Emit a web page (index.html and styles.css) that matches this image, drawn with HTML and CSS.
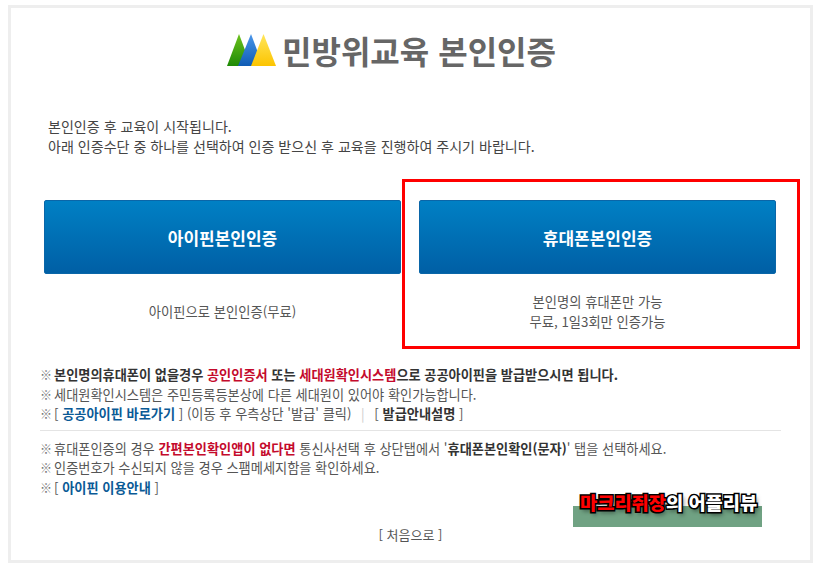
FILE: index.html
```html
<!DOCTYPE html>
<html lang="ko">
<head>
    <meta charset="UTF-8">
    <title>민방위교육 본인인증</title>
    <link rel="stylesheet" href="styles.css">
</head>
<body>

<div id="container">
    <h1 class="title">
        <svg class="logo" width="49" height="33" viewBox="0 0 49 33">
            <defs>
                <linearGradient id="logoGreen" x1="0" y1="0" x2="0" y2="1">
                    <stop offset="0" stop-color="#6cc21c"/>
                    <stop offset="1" stop-color="#1f8a06"/>
                </linearGradient>
                <linearGradient id="logoBlue" x1="0" y1="0" x2="0" y2="1">
                    <stop offset="0" stop-color="#4a96ea"/>
                    <stop offset="1" stop-color="#0f5cb4"/>
                </linearGradient>
                <linearGradient id="logoYellow" x1="0" y1="0" x2="0" y2="1">
                    <stop offset="0" stop-color="#ffe65c"/>
                    <stop offset="1" stop-color="#fcc400"/>
                </linearGradient>
            </defs>
            <polygon points="12,0 24,32 0,32" fill="url(#logoGreen)"/>
            <polygon points="24,0 36,32 11,32" fill="url(#logoBlue)"/>
            <polygon points="36.5,0 49,32 24,32" fill="url(#logoYellow)"/>
        </svg>
        <span>민방위교육 본인인증</span>
    </h1>

    <p class="intro">
        본인인증 후 교육이 시작됩니다.<br>
        아래 인증수단 중 하나를 선택하여 인증 받으신 후 교육을 진행하여 주시기 바랍니다.
    </p>

    <div class="methods">
        <div class="method">
            <a class="btn">아이핀본인인증</a>
            <p class="methodText">아이핀으로 본인인증(무료)</p>
        </div>
        <div class="method">
            <a class="btn">휴대폰본인인증</a>
            <p class="methodText">본인명의 휴대폰만 가능<br>무료, 1일3회만 인증가능</p>
        </div>
    </div>

    <ul class="notes">
        <li><b>본인명의휴대폰이 없을경우 <em>공인인증서</em> 또는 <em>세대원확인시스템</em>으로 공공아이핀을 발급받으시면 됩니다.</b></li>
        <li>세대원확인시스템은 주민등록등본상에 다른 세대원이 있어야 확인가능합니다.</li>
        <li>[ <a class="link">공공아이핀 바로가기</a> ] (이동 후 우측상단 '발급' 클릭) <span class="sep">|</span> [ <b>발급안내설명</b> ]</li>
    </ul>

    <ul class="notes notesLast">
        <li>휴대폰인증의 경우 <b><em>간편본인확인앱이 없다면</em></b> 통신사선택 후 상단탭에서 '<b>휴대폰본인확인(문자)</b>' 탭을 선택하세요.</li>
        <li>인증번호가 수신되지 않을 경우 스팸메세지함을 확인하세요.</li>
        <li>[ <a class="link">아이핀 이용안내</a> ]</li>
    </ul>

    <p class="home">[ 처음으로 ]</p>

    <!-- annotations drawn over the captured page -->
    <div class="redBox"></div>
    <div class="stamp">
        <div class="stampBar"></div>
        <div class="stampText"><span class="red">마크리쥐장</span>의 어플리뷰</div>
    </div>
</div>

</body>
</html>
```

FILE: styles.css
```css
* {
    box-sizing: border-box;
}

body {
    margin: 0;
    background-color: white;
    font-family: "Noto Sans CJK KR", "Liberation Sans", sans-serif;
    color: #555;
}

/*CSS for whole page*/
#container {
    position: relative;
    width: 805px;
    height: 558px;
    margin: 5px 0 0 8px;
    border: 3px solid #eee;
    overflow: hidden;
}

.title {
    display: flex;
    justify-content: center;
    align-items: center;
    gap: 6px;
    height: 48px;
    margin: 18px 0 0 0;
    padding-right: 38px;
    font-size: 32px;
    font-weight: 700;
    color: #666;
}

.logo {
    flex: none;
}

.intro {
    margin: 42px 0 0 37px;
    font-size: 14.06px;
    line-height: 20px;
    color: #444;
}

.methods {
    display: flex;
    gap: 18px;
    margin: 44px 0 0 33px;
}

.method {
    width: 357px;
    text-align: center;
}

.btn {
    display: flex;
    justify-content: center;
    align-items: center;
    height: 74px;
    border: 1px solid #0a66a8;
    border-radius: 2px;
    background: linear-gradient(#0080c4, #005fa5);
    font-size: 17px;
    font-weight: 700;
    color: white;
}

.methodText {
    display: flex;
    align-items: center;
    justify-content: center;
    height: 40px;
    margin: 18px 0 0 0;
    font-size: 13.3px;
    line-height: 20px;
}

.notes {
    list-style: none;
    margin: 0 29px 0 29px;
    padding: 0;
    font-size: 13.2px;
    line-height: 19.5px;
}

.notes:first-of-type {
    margin-top: 33px;
    padding-bottom: 6px;
    border-bottom: 1px solid #e4e4e4;
}

.notesLast {
    margin-top: 8px;
}

.notes li::before {
    content: "※";
    display: inline-block;
    width: 14px;
    font-size: 12px;
    color: #777;
}

.notes b {
    color: #333;
}

.notes em {
    font-style: normal;
    color: #c40a2c;
}

.link {
    font-weight: 700;
    color: #0a5a96;
}

.sep {
    margin: 0 6px;
    color: #ccc;
}

.home {
    margin: 28px 0 0 0;
    text-align: center;
    font-size: 13px;
    line-height: 20px;
}

/*CSS for the red box around the phone option*/
.redBox {
    position: absolute;
    left: 391px;
    top: 171px;
    width: 398px;
    height: 170px;
    border: 3px solid #f00;
}

.stamp {
    position: absolute;
    left: 562px;
    top: 480px;
    width: 190px;
    height: 40px;
}

.stampBar {
    position: absolute;
    left: 0;
    top: 18px;
    width: 189px;
    height: 21px;
    background-color: #70a283;
}

.stampText {
    position: absolute;
    left: 7px;
    top: -1px;
    font-size: 18.7px;
    line-height: 30px;
    font-weight: 900;
    white-space: nowrap;
    color: white;
    -webkit-text-stroke: 3px black;
    paint-order: stroke fill;
    text-shadow: 2px 3px 4px rgba(0, 0, 0, 0.5);
}

.red {
    color: #f00;
}
```
